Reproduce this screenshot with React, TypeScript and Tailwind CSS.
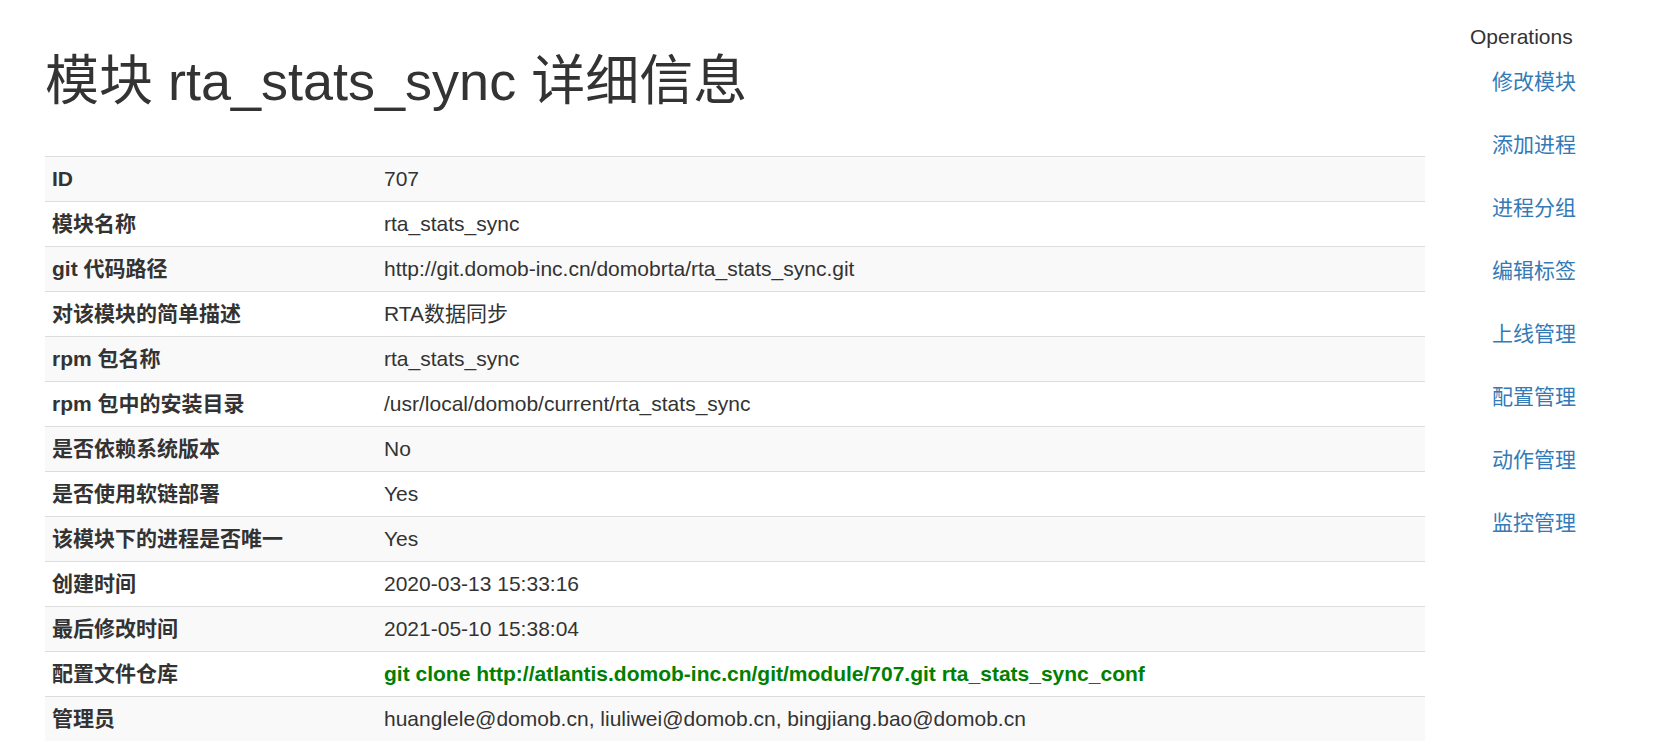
const rows: { label: string; value: string; strong?: boolean }[] = [
  { label: "ID", value: "707" },
  { label: "模块名称", value: "rta_stats_sync" },
  { label: "git 代码路径", value: "http://git.domob-inc.cn/domobrta/rta_stats_sync.git" },
  { label: "对该模块的简单描述", value: "RTA数据同步" },
  { label: "rpm 包名称", value: "rta_stats_sync" },
  { label: "rpm 包中的安装目录", value: "/usr/local/domob/current/rta_stats_sync" },
  { label: "是否依赖系统版本", value: "No" },
  { label: "是否使用软链部署", value: "Yes" },
  { label: "该模块下的进程是否唯一", value: "Yes" },
  { label: "创建时间", value: "2020-03-13 15:33:16" },
  { label: "最后修改时间", value: "2021-05-10 15:38:04" },
  {
    label: "配置文件仓库",
    value: "git clone http://atlantis.domob-inc.cn/git/module/707.git rta_stats_sync_conf",
    strong: true,
  },
  { label: "管理员", value: "huanglele@domob.cn, liuliwei@domob.cn, bingjiang.bao@domob.cn" },
];

const operations = [
  "修改模块",
  "添加进程",
  "进程分组",
  "编辑标签",
  "上线管理",
  "配置管理",
  "动作管理",
  "监控管理",
];

export default function App() {
  return (
    <div className="flex bg-white font-['Liberation_Sans','Noto_Sans_CJK_SC',sans-serif] text-[21px] leading-[30px] text-[#333333]">
      <main className="min-w-0 flex-1 pl-[45px]">
        <h1 className="mt-[51px] mb-[45px] text-[54px] leading-[60px]">模块 rta_stats_sync 详细信息</h1>
        <table className="w-full table-fixed border-collapse text-left">
          <tbody>
            {rows.map((row) => (
              <tr key={row.label} className="border-t border-[#dddddd] odd:bg-[#f9f9f9]">
                <th scope="row" className="w-[332px] p-[7px] font-bold">
                  {row.label}
                </th>
                <td className={row.strong ? "p-[7px] font-bold text-[#008000]" : "p-[7px]"}>
                  {row.value}
                </td>
              </tr>
            ))}
          </tbody>
        </table>
      </main>
      <aside className="w-[234px] shrink-0 pt-[22px] pl-[45px]">
        <h2>Operations</h2>
        <ul>
          {operations.map((name) => (
            <li key={name} className="mb-[3px] px-[22px] py-[15px]">
              <a href="#" className="text-[#337ab7] hover:underline">
                {name}
              </a>
            </li>
          ))}
        </ul>
      </aside>
    </div>
  );
}
